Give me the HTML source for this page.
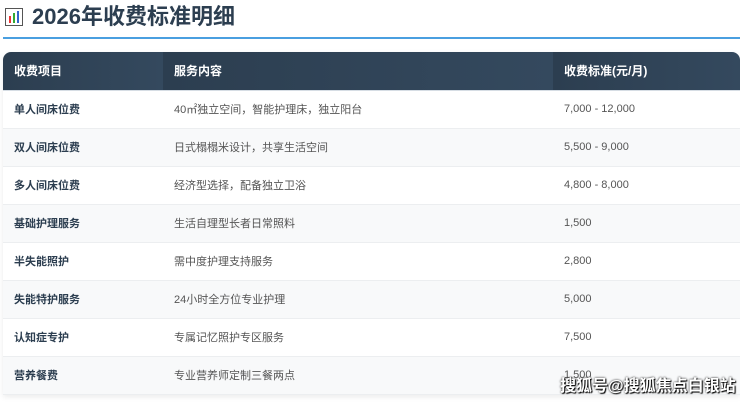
<html><head><style>
body{margin:0;width:740px;height:402px;background:#fff;font-family:"Liberation Sans","Noto Sans CJK SC",sans-serif;overflow:hidden;position:relative}
h1{position:absolute;left:4px;top:2px;margin:0;font-size:22px;line-height:30px;color:#2c3e50;font-weight:bold}
.line{position:absolute;left:3px;right:0;top:37px;height:2px;background:#4a9fe0}
table{position:absolute;left:3px;top:52px;width:737px;border-collapse:collapse;border-radius:8px 8px 0 0;overflow:hidden;box-shadow:0 2px 6px rgba(0,0,0,.08)}
th{background:linear-gradient(90deg,#2c3e50,#34495e);color:#fff;font-size:12px;font-weight:bold;text-align:left;height:38px;padding:0 0 0 11px;border-bottom:1px solid #d6dde4}
tr{height:38px}
td{font-size:11px;color:#555;height:38px;padding:0 0 0 11px;border-bottom:1px solid #eceef0;box-sizing:border-box}
td:first-child{font-weight:bold;color:#2c3e50}
tr:nth-child(odd) td{background:#f8f9fa}
.wm{position:absolute;left:560px;top:372px;font-size:16px;color:#fff;font-weight:bold;text-shadow:0 0 2px #000,1px 1px 1px #000}
.ic{position:absolute;left:5px;top:8px;width:16px;height:16px;border:1px solid #555;background:#fff}
</style></head><body>
<div class="ic"><svg width="16" height="16"><rect x="3" y="7" width="2" height="7" fill="#e33"/><rect x="7" y="4" width="2" height="10" fill="#3a3"/><rect x="11" y="2" width="2" height="12" fill="#36c"/></svg></div>
<h1 style="left:32px">2026年收费标准明细</h1>
<div class="line"></div>
<table>
<tr><th style="width:149px">收费项目</th><th style="width:379px">服务内容</th><th>收费标准(元/月)</th></tr>
<tr><td>单人间床位费</td><td>40㎡独立空间，智能护理床，独立阳台</td><td>7,000 - 12,000</td></tr>
<tr><td>双人间床位费</td><td>日式榻榻米设计，共享生活空间</td><td>5,500 - 9,000</td></tr>
<tr><td>多人间床位费</td><td>经济型选择，配备独立卫浴</td><td>4,800 - 8,000</td></tr>
<tr><td>基础护理服务</td><td>生活自理型长者日常照料</td><td>1,500</td></tr>
<tr><td>半失能照护</td><td>需中度护理支持服务</td><td>2,800</td></tr>
<tr><td>失能特护服务</td><td>24小时全方位专业护理</td><td>5,000</td></tr>
<tr><td>认知症专护</td><td>专属记忆照护专区服务</td><td>7,500</td></tr>
<tr><td>营养餐费</td><td>专业营养师定制三餐两点</td><td>1,500</td></tr>
</table>
<div class="wm">搜狐号@搜狐焦点白银站</div>
</body></html>
